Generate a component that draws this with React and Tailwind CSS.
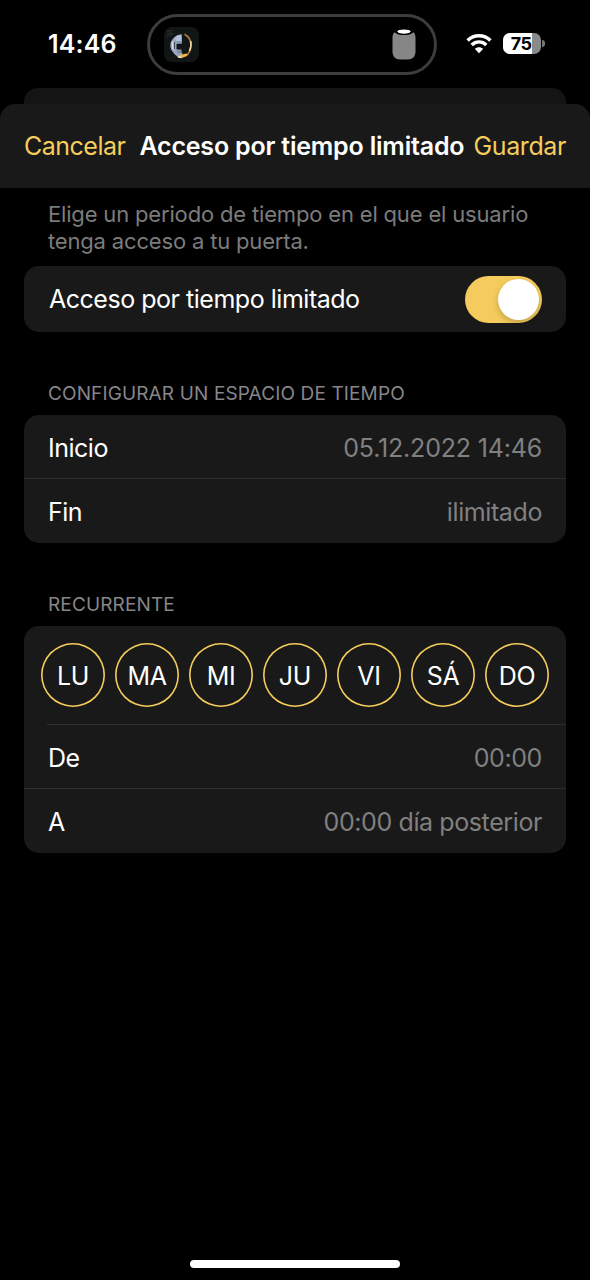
import { useState } from 'react'

const days = ['LU', 'MA', 'MI', 'JU', 'VI', 'SÁ', 'DO']

function AlbumArt() {
  return (
    <svg className="w-[35px] h-[35px]" viewBox="0 0 35 35" fill="none">
      <rect width="35" height="35" rx="8" fill="#121516" />
      <path d="M3 4.500l6-1.500M3 7l5-1M3 9.500l7-3" stroke="#3a3d3e" strokeWidth="0.700" />
      <path d="M17.500 7.500C11 8 6.800 12.500 6.300 18.500c0 3.500 2 6 4 8.500l4 3.500 4-.5v-4.500h-4.500v-9h4.200z" fill="#98a6bd" />
      <path d="M13 8.500l4.500-1v6.500h-5l-2-2.500z" fill="#b1c1da" />
      <path d="M12.500 17h5v5.500h-5z" fill="#121516" />
      <path d="M12.500 14h4.500v2.500h-4.500zM12 22.500h5.500v3h-4z" fill="#8593ab" />
      <path d="M7.800 15l1.700-1 .8 9-2-1z" fill="#e5e8ec" />
      <path d="M10.300 15v7" stroke="#2a303b" strokeWidth="1" />
      <path d="M20.500 7.200c4.500 2.300 6.700 7 6.400 11.500-.2 4.500-2 8-5.200 10.500" stroke="#a8783a" strokeWidth="1.700" />
      <path d="M26.700 14c.7 3 .2 7-1.300 10" stroke="#f1d7a4" strokeWidth="1.500" />
      <path d="M16 28l6.500-1.500 1 1.500c-2 2-4.500 3-7.500 2.500z" fill="#eeb94b" />
      <path d="M14 29.800l3.500.7" stroke="#fff4d5" strokeWidth="1.300" />
    </svg>
  )
}

function HomePod() {
  return (
    <svg className="w-6 h-[31px]" viewBox="0 0 24 31">
      <path d="M2.500 3.200C1 4.500.5 6.500.5 9v13.500C.5 27.500 3.500 30.500 8 30.500h8c4.500 0 7.500-3 7.500-8V9c0-2.500-.5-4.500-2-5.800C19.500 5.200 16 6 12 6S4.500 5.200 2.500 3.200z" fill="#868686" />
      <ellipse cx="12" cy="2.600" rx="6.700" ry="2.100" fill="#fff" />
    </svg>
  )
}

function WifiIcon() {
  return (
    <svg className="w-[26px] h-[20px]" viewBox="0 0 26 20" fill="none" stroke="#fff">
      <path d="M1.600 6.400C8 .2 18 .2 24.400 6.400" strokeWidth="3.500" />
      <path d="M5.700 10.900c4.200-4 10.400-4 14.600 0" strokeWidth="3.400" />
      <path d="M8.800 14.800c2.400-2.200 6-2.200 8.400 0L13 19.200z" fill="#fff" stroke="none" />
    </svg>
  )
}

function Battery({ level }) {
  return (
    <div className="flex items-center gap-px">
      <div className="relative w-[38px] h-[21px] rounded-[7px] overflow-hidden bg-[#8a8a8a]">
        <div className="h-full bg-white" style={{ width: `${level}%` }} />
        <span className="absolute inset-0 flex items-center justify-center pr-[2px] text-black text-[18px] font-bold leading-none tracking-[-0.7px]">{level}</span>
      </div>
      <div className="w-[3px] h-[7px] rounded-r-full bg-[#777]" />
    </div>
  )
}

function StatusBar() {
  return (
    <div className="h-[88px] flex items-start shrink-0">
      <div className="w-[147px] pl-12 pt-[28px] text-[25px] leading-8 font-semibold tracking-[0.150px]">14:46</div>
      <div className="w-[290px] h-[61px] mt-[14px] rounded-full border-[3px] border-[#3d3d3d] flex items-center justify-between pl-[14px] pr-[18px]">
        <AlbumArt />
        <HomePod />
      </div>
      <div className="flex items-center gap-[11px] h-[21px] mt-[33px] ml-[29px]">
        <WifiIcon />
        <Battery level={75} />
      </div>
    </div>
  )
}

function SheetHeader() {
  return (
    <>
      <div className="mx-6 h-4 shrink-0 rounded-t-[14px] bg-[#141415]" />
      <div className="h-[84px] shrink-0 rounded-t-[15px] bg-[#191919] flex items-center px-6 pt-px text-[25px]">
        <button className="text-[#f6cd5b] whitespace-nowrap tracking-[-0.5px]">Cancelar</button>
        <h1 className="ml-[14px] font-semibold whitespace-nowrap tracking-[-0.2px]">Acceso por tiempo limitado</h1>
        <button className="ml-auto text-[#f6cd5b] whitespace-nowrap tracking-[-0.4px]">Guardar</button>
      </div>
    </>
  )
}

function Card({ children, className = '' }) {
  return <div className={`rounded-[15px] bg-[#191919] overflow-hidden ${className}`}>{children}</div>
}

function Row({ label, value }) {
  return (
    <div className="h-16 flex items-center justify-between px-6 pt-[3px] text-[25px] tracking-[-0.4px]">
      <span className="tracking-[-0.5px]">{label}</span>
      <span className="text-[#808080]">{value}</span>
    </div>
  )
}

function SectionTitle({ children }) {
  return <h2 className="px-6 pt-px text-[19px] leading-6 text-[#86868a] uppercase tracking-[0.130px]">{children}</h2>
}

export default function App() {
  const [limited, setLimited] = useState(true)

  return (
    <div className="w-[590px] h-[1280px] bg-black text-white font-['Inter',sans-serif] flex flex-col overflow-hidden">
      <StatusBar />
      <SheetHeader />

      <main className="flex-1 px-6 pt-[13px]">
        <p className="px-6 text-[22px] leading-[27px] text-[#7c7c7c] tracking-[-0.170px]">
          Elige un periodo de tiempo en el que el usuario
          <br />
          tenga acceso a tu puerta.
        </p>

        <Card className="mt-[11px] h-[66px] flex items-center justify-between px-6">
          <span className="pl-px pt-[2px] text-[25px] tracking-[-0.480px]">Acceso por tiempo limitado</span>
          <button
            role="switch"
            aria-checked={limited}
            onClick={() => setLimited(!limited)}
            className={`w-[77px] h-[47px] rounded-full p-[3px] flex items-center ${limited ? 'justify-end bg-[#f4cb5c]' : 'justify-start bg-[#39393d]'}`}
          >
            <span className="w-[41px] h-[41px] rounded-full bg-white shadow-[0_3px_6px_rgba(0,0,0,0.2)]" />
          </button>
        </Card>

        {/* Time slot */}
        <div className="mt-[49px]">
          <SectionTitle>Configurar un espacio de tiempo</SectionTitle>
          <Card className="mt-[9px]">
            <Row label="Inicio" value={<span className="tracking-[-0.180px]">05.12.2022 14:46</span>} />
            <div className="h-px -mt-px bg-[#2e2e30]" />
            <Row label="Fin" value="ilimitado" />
          </Card>
        </div>

        {/* Weekly recurrence */}
        <div className="mt-[49px]">
          <SectionTitle>Recurrente</SectionTitle>
          <Card className="mt-[9px]">
            <div className="h-[99px] flex items-start justify-between px-[17px] pt-[17px]">
              {days.map((day) => (
                <button key={day} className="w-16 h-16 pt-[3px] rounded-full shadow-[inset_0_0_0_1.6px_#f6cd5b] text-[25px] tracking-[-0.3px]">
                  {day}
                </button>
              ))}
            </div>
            <div className="h-px -mt-px ml-[23px] bg-[#2e2e30]" />
            <Row label="De" value="00:00" />
            <div className="h-px -mt-px bg-[#2e2e30]" />
            <Row label="A" value="00:00 día posterior" />
          </Card>
        </div>
      </main>

      <div className="w-[210px] h-2 mb-3 mx-auto rounded-full bg-white shrink-0" />
    </div>
  )
}
